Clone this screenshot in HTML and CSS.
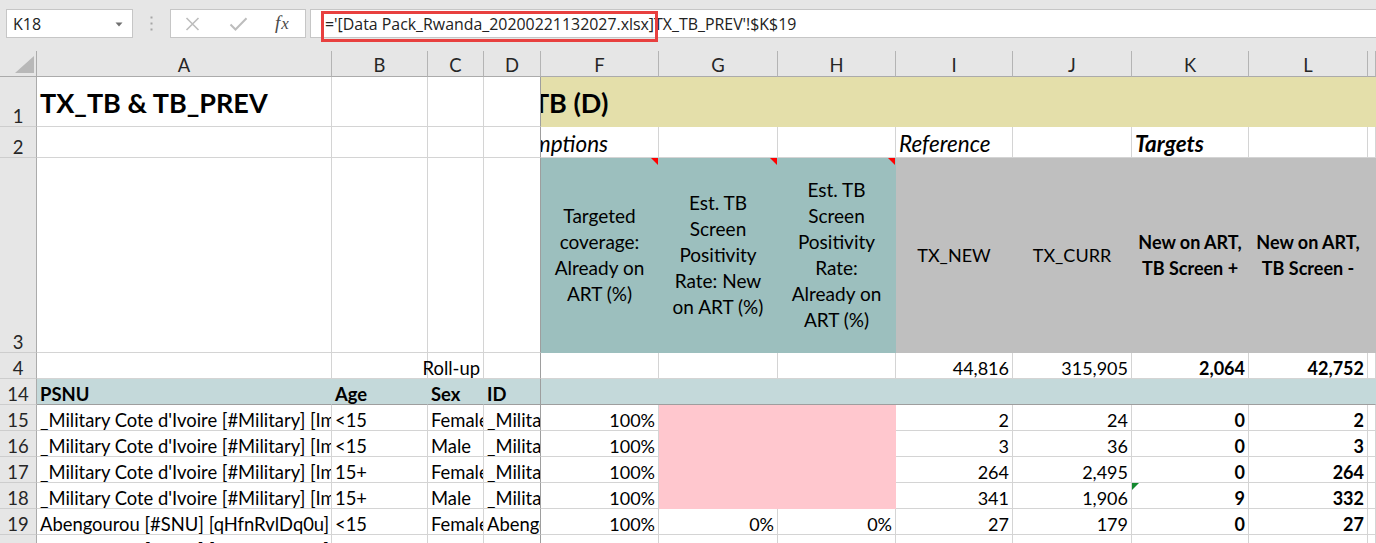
FILE: index.html
```html
<!DOCTYPE html>
<html>
<head>
<meta charset="utf-8">
<link rel="stylesheet" href="styles.css">
</head>
<body>
<div class="fbar">
  <div class="namebox"><span>K18</span><svg class="caret" width="8" height="5" viewBox="0 0 8 5"><polygon points="0.5,0.5 7.5,0.5 4,4.5" fill="#707070"/></svg></div>
  <div class="grip"><svg width="3" height="15" viewBox="0 0 3 15"><rect x="0.5" y="0.5" width="2" height="2" fill="#a6a6a6"/><rect x="0.5" y="6.5" width="2" height="2" fill="#a6a6a6"/><rect x="0.5" y="12.5" width="2" height="2" fill="#a6a6a6"/></svg></div>
  <div class="fxbox">
    <svg class="ico-x" width="15" height="14" viewBox="0 0 15 14"><path d="M1.5 1 L13.5 13 M13.5 1 L1.5 13" stroke="#bdbdbd" stroke-width="1.6" fill="none"/></svg>
    <svg class="ico-ok" width="19" height="14" viewBox="0 0 19 14"><path d="M1.5 7.5 L6.5 12.5 L17.5 1.2" stroke="#bdbdbd" stroke-width="2" fill="none"/></svg>
    <span class="fx"><i>f</i><i class="fxx">x</i></span>
  </div>
  <div class="formula"><span>='[Data Pack_Rwanda_20200221132027.xlsx]TX_TB_PREV'!$K$19</span></div>
  <div class="hl"></div>
</div>

<div class="sheet">
  <!-- column headers -->
  <div class="corner"><svg class="ctri" width="19" height="17" viewBox="0 0 19 17"><polygon points="19,0 19,17 0,17" fill="#b8b8b8"/></svg></div>
  <div class="ch">A</div><div class="ch">B</div><div class="ch">C</div><div class="ch">D</div>
  <div class="ch">F</div><div class="ch">G</div><div class="ch">H</div><div class="ch">I</div>
  <div class="ch">J</div><div class="ch">K</div><div class="ch">L</div><div class="ch"></div>

  <!-- row 1 -->
  <div class="rh">1</div>
  <div class="c title">TX_TB &amp; TB_PREV</div>
  <div class="c"></div><div class="c"></div><div class="c fz"></div>
  <div class="c band title span8"><span class="lead1">TX_TB (D)</span></div>

  <!-- row 2 -->
  <div class="rh">2</div>
  <div class="c"></div><div class="c"></div><div class="c"></div><div class="c fz"></div>
  <div class="c it"><span class="lead2">Assumptions</span></div>
  <div class="c"></div><div class="c"></div>
  <div class="c it">Reference</div>
  <div class="c"></div>
  <div class="c it b">Targets</div>
  <div class="c"></div><div class="c"></div>

  <!-- row 3 -->
  <div class="rh">3</div>
  <div class="c"></div><div class="c"></div><div class="c"></div><div class="c fz"></div>
  <div class="c teal wrap cm">Targeted<br>coverage:<br>Already on<br>ART (%)</div>
  <div class="c teal wrap cm">Est. TB<br>Screen<br>Positivity<br>Rate: New<br>on ART (%)</div>
  <div class="c teal wrap cm">Est. TB<br>Screen<br>Positivity<br>Rate:<br>Already on<br>ART (%)</div>
  <div class="c grey wrap sm">TX_NEW</div>
  <div class="c grey wrap sm">TX_CURR</div>
  <div class="c grey wrap sm b">New on ART,<br>TB Screen +</div>
  <div class="c grey wrap sm b">New on ART,<br>TB Screen -</div>
  <div class="c grey"></div>

  <!-- row 4 -->
  <div class="rh">4</div>
  <div class="c"></div><div class="c"></div>
  <div class="c r ov">Roll-up</div>
  <div class="c fz"></div>
  <div class="c"></div><div class="c"></div><div class="c"></div>
  <div class="c r n">44,816</div><div class="c r n">315,905</div><div class="c r n b">2,064</div><div class="c r n b">42,752</div>
  <div class="c"></div>

  <!-- row 14 -->
  <div class="rh">14</div>
  <div class="c hd b">PSNU</div><div class="c hd b">Age</div><div class="c hd b">Sex</div><div class="c hd b fz">ID</div>
  <div class="c hd span8"></div>

  <!-- row 15 -->
  <div class="rh">15</div>
  <div class="c">_Military Cote d'Ivoire [#Military] [ImspTQPwCqd]</div><div class="c">&lt;15</div><div class="c">Female</div><div class="c fz">_Military Cote d'Ivoire</div>
  <div class="c r n">100%</div><div class="c pk"></div><div class="c pk"></div>
  <div class="c r n">2</div><div class="c r n">24</div><div class="c r n b">0</div><div class="c r n b">2</div><div class="c"></div>

  <!-- row 16 -->
  <div class="rh">16</div>
  <div class="c">_Military Cote d'Ivoire [#Military] [ImspTQPwCqd]</div><div class="c">&lt;15</div><div class="c">Male</div><div class="c fz">_Military Cote d'Ivoire</div>
  <div class="c r n">100%</div><div class="c pk"></div><div class="c pk"></div>
  <div class="c r n">3</div><div class="c r n">36</div><div class="c r n b">0</div><div class="c r n b">3</div><div class="c"></div>

  <!-- row 17 -->
  <div class="rh">17</div>
  <div class="c">_Military Cote d'Ivoire [#Military] [ImspTQPwCqd]</div><div class="c">15+</div><div class="c">Female</div><div class="c fz">_Military Cote d'Ivoire</div>
  <div class="c r n">100%</div><div class="c pk"></div><div class="c pk"></div>
  <div class="c r n">264</div><div class="c r n">2,495</div><div class="c r n b">0</div><div class="c r n b">264</div><div class="c"></div>

  <!-- row 18 -->
  <div class="rh">18</div>
  <div class="c">_Military Cote d'Ivoire [#Military] [ImspTQPwCqd]</div><div class="c">15+</div><div class="c">Male</div><div class="c fz">_Military Cote d'Ivoire</div>
  <div class="c r n">100%</div><div class="c pk"></div><div class="c pk"></div>
  <div class="c r n">341</div><div class="c r n">1,906</div><div class="c r n b err">9</div><div class="c r n b">332</div><div class="c"></div>

  <!-- row 19 -->
  <div class="rh">19</div>
  <div class="c">Abengourou [#SNU] [qHfnRvlDq0u]</div><div class="c">&lt;15</div><div class="c">Female</div><div class="c fz">Abengourou</div>
  <div class="c r n">100%</div><div class="c r n">0%</div><div class="c r n">0%</div>
  <div class="c r n">27</div><div class="c r n">179</div><div class="c r n b">0</div><div class="c r n b">27</div><div class="c"></div>

  <!-- row 20 -->
  <div class="rh">20</div>
  <div class="c">Abengourou [#SNU] [qHfnRvlDq0u]</div><div class="c">&lt;15</div><div class="c">Male</div><div class="c fz">Abengourou</div>
  <div class="c r n">100%</div><div class="c r n">0%</div><div class="c r n">0%</div>
  <div class="c r n">31</div><div class="c r n">202</div><div class="c r n b">0</div><div class="c r n b">31</div><div class="c"></div>
</div>
</body>
</html>
```
FILE: styles.css
```css
* { box-sizing: border-box; margin: 0; padding: 0; }
html, body { width: 1376px; height: 543px; overflow: hidden; background: #fff; }
body { font-family: Lato, "Liberation Sans", sans-serif; color: #000; }

/* formula bar */
.fbar {
  position: relative;
  height: 51px;
  background: #e6e6e6;
  display: flex;
  align-items: flex-start;
  padding-top: 9px;
}
.namebox {
  margin-left: 6px;
  width: 127px;
  height: 29px;
  background: #fff;
  border: 1px solid #c6c6c6;
  display: flex;
  align-items: center;
  justify-content: space-between;
  padding: 0 9px 0 6px;
  font-family: "Open Sans", "Noto Sans", sans-serif;
  font-size: 16px;
  color: #222;
}
.caret { margin-top: 1px; }
.grip {
  width: 37px;
  height: 29px;
  display: flex;
  align-items: center;
  justify-content: center;
}
.fxbox {
  width: 136px;
  height: 29px;
  background: #fff;
  border: 1px solid #c6c6c6;
  display: flex;
  align-items: center;
  padding-left: 14px;
}
.ico-ok { margin-left: 29px; }
.fx {
  margin-left: 27px;
  font-family: "Liberation Serif", serif;
  font-size: 19px;
  color: #4a4a4a;
  line-height: 1;
  margin-top: -2px;
}
.fx i { font-style: italic; }
.fxx { margin-left: 1px; font-size: 17px; }
.formula {
  margin-left: 4px;
  flex: 1;
  height: 29px;
  background: #fff;
  border: 1px solid #c6c6c6;
  border-right: none;
  padding-left: 14px;
  display: flex;
  align-items: center;
  font-family: "Open Sans", "Noto Sans", sans-serif;
  font-size: 15.9px;
  color: #222;
  white-space: nowrap;
}
.hl {
  position: absolute;
  left: 321px;
  top: 11px;
  width: 337px;
  height: 31px;
  border: 3px solid #e8403f;
}

/* sheet grid */
.sheet {
  display: grid;
  grid-template-columns: 37px 295px 96px 56px 57px 118px 119px 118px 117px 119px 117px 119px 1fr;
  grid-template-rows: 26px 50px 31px 195px repeat(8, 26px);
  font-size: 18.4px;
  line-height: 20px;
}
.corner {
  background: #e6e6e6;
  border-right: 1px solid #ababab;
  border-bottom: 1px solid #ababab;
  position: relative;
}
.ctri { position: absolute; right: 2px; bottom: 3px; }
.ch {
  background: #e6e6e6;
  border-right: 1px solid #b4b4b4;
  border-bottom: 1px solid #ababab;
  display: flex;
  align-items: flex-end;
  justify-content: center;
  color: #262626;
  padding-bottom: 1px;
}
.rh {
  background: #e6e6e6;
  border-right: 1px solid #ababab;
  border-bottom: 1px solid #cdcdcd;
  display: flex;
  align-items: flex-end;
  justify-content: center;
  color: #262626;
  font-size: 18.5px;
}
.c {
  position: relative;
  min-width: 0;
  border-right: 1px solid #d4d4d4;
  border-bottom: 1px solid #d4d4d4;
  display: flex;
  align-items: flex-end;
  padding: 0 3px;
  overflow: hidden;
  white-space: nowrap;
}
.fz { border-right-color: #9e9e9e; }
.r { justify-content: flex-end; }
.n { font-size: 18px; }
.sm { font-size: 18px; }
.ov { overflow: visible; }
.b { font-weight: 700; }
.it { font-style: italic; font-size: 22.5px; line-height: 26px; }
.span8 { grid-column: span 8; }

.title {
  align-items: center;
  font-size: 27px;
  line-height: 32px;
  font-weight: 700;
  padding-top: 2px;
}
.band {
  background: #e4dfaa;
  border-color: transparent;
}
.lead1 { margin-left: -58px; }
.lead2 { margin-left: -55px; }

.wrap {
  white-space: normal;
  align-items: center;
  justify-content: center;
  text-align: center;
  line-height: 26px;
}
.teal { background: #9cbfbe; border-color: transparent; font-size: 19px; }
.grey { background: #bfbfbf; border-color: transparent; }
.hd {
  background: #c4d9da;
  border-right-color: transparent;
  border-bottom-color: #9e9e9e;
}
.hd.fz { border-right-color: #9e9e9e; }
.pk { background: #ffc7ce; border-color: transparent; }

.cm::after {
  content: "";
  position: absolute;
  top: 0;
  right: 0;
  border-top: 7px solid #ff0000;
  border-left: 7px solid transparent;
}
.err::before {
  content: "";
  position: absolute;
  top: 0;
  left: 0;
  border-top: 7px solid #13892f;
  border-right: 7px solid transparent;
}
```
